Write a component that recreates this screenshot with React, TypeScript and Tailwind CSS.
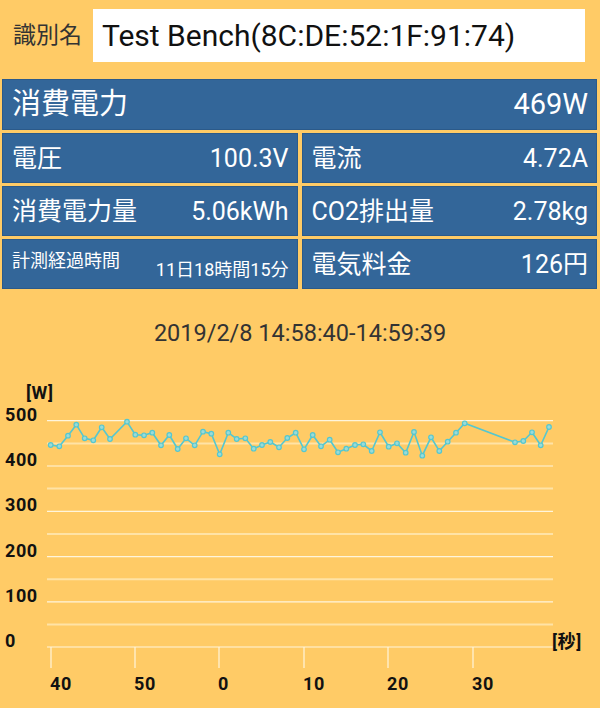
import React from "react";

const pts: [number, number][] = [
  [50.7, 445], [59.3, 446.3], [68, 435.7], [76.3, 424.7], [84.7, 438.3], [93.3, 440.3],
  [101.7, 427.3], [110, 439], [127, 421.7], [135.3, 434.7], [144, 435.3], [152.3, 432.7],
  [161, 445.3], [169.3, 435], [177.7, 449], [186, 438.3], [194.7, 445.3], [203, 431.7],
  [211.3, 433.7], [219.7, 454.3], [228.3, 432.7], [236.7, 439], [245.3, 438.3], [253.7, 448.7],
  [262, 445], [270.3, 442], [279, 447.3], [287.3, 438], [295.7, 432.7], [304, 449.3],
  [312.7, 435], [321, 446.3], [329.7, 439.7], [338, 452.3], [346.3, 448.7], [355, 445],
  [363.3, 444.3], [371.7, 451], [380, 432.3], [388.7, 446.7], [397, 443.3], [405.7, 452.7],
  [414, 432], [422.3, 455.7], [431, 437.3], [439.3, 451], [447.7, 441.7], [456, 432.7],
  [464.7, 423.3], [515, 442.3], [523.3, 441], [532, 432.3], [540.7, 445.3], [549, 427],
];

const majors = [
  { y: 420.7, l: "500" },
  { y: 466, l: "400" },
  { y: 511.3, l: "300" },
  { y: 556.6, l: "200" },
  { y: 601.8, l: "100" },
  { y: 647, l: "0" },
];
const minors = [443.4, 488.6, 533.9, 579.2, 624.4];
const ticks = [
  { x: 51, l: "40" },
  { x: 135, l: "50" },
  { x: 219, l: "0" },
  { x: 304, l: "10" },
  { x: 388, l: "20" },
  { x: 473, l: "30" },
];

function Cell({ label, value }: { label: string; value: string }) {
  return (
    <div className="h-[50px] bg-[#336699] border border-[#2b5a8a] flex items-center justify-between pl-[9px] pr-[8px] text-white text-[25px] leading-none">
      <span>{label}</span>
      <span>{value}</span>
    </div>
  );
}

export default function App() {
  const font = "font-['Roboto','Noto_Sans_CJK_JP',sans-serif]";
  return (
    <div className={`w-[600px] h-[708px] bg-[#ffcb66] overflow-hidden ${font}`}>
      <div className="flex items-center pt-[9px] pl-[13px]">
        <span className="text-[23px] text-[#333] w-[80px] leading-none">識別名</span>
        <div className="w-[492px] h-[53px] bg-white flex items-center pl-[9px] text-[30px] text-[#111] leading-none">
          Test Bench(8C:DE:52:1F:91:74)
        </div>
      </div>

      <div className="mt-[17px] pl-[2px] pr-[3px] flex flex-col gap-[3px]">
        <div className="h-[51px] bg-[#336699] border border-[#2b5a8a] flex items-center justify-between pl-[9px] pr-[8px] text-white text-[29px] leading-none">
          <span>消費電力</span>
          <span>469W</span>
        </div>
        <div className="grid grid-cols-2 gap-x-[4px] gap-y-[3px]">
          <Cell label="電圧" value="100.3V" />
          <Cell label="電流" value="4.72A" />
          <Cell label="消費電力量" value="5.06kWh" />
          <Cell label="CO2排出量" value="2.78kg" />
          <div className="h-[50px] bg-[#336699] border border-[#2b5a8a] flex justify-between pl-[9px] pr-[8px] text-white text-[18px] leading-[24px]">
            <span className="self-start pt-[9px]">計測経過時間</span>
            <span className="self-end pb-[6px]">11日18時間15分</span>
          </div>
          <Cell label="電気料金" value="126円" />
        </div>
      </div>

      <div className="h-[71px] pt-[19px] flex items-center justify-center text-[23.5px] text-[#333] leading-none">
        2019/2/8 14:58:40-14:59:39
      </div>

      <svg width="600" height="348" viewBox="0 360 600 348" className="block">
        {minors.map((y) => (
          <line key={y} x1={47} x2={553} y1={y} y2={y} stroke="#ffe3a6" strokeWidth={2} />
        ))}
        {majors.map((m) => (
          <line key={m.l} x1={47} x2={553} y1={m.y} y2={m.y} stroke="#fff5dc" strokeWidth={1.2} />
        ))}
        {ticks.map((t) => (
          <line key={t.l} x1={t.x} x2={t.x} y1={647} y2={668} stroke="#fff5dc" strokeWidth={1.2} />
        ))}
        <polyline
          points={pts.map((p) => p.join(",")).join(" ")}
          fill="none"
          stroke="#55c7cf"
          strokeWidth={1.6}
        />
        {pts.map((p, i) => (
          <circle key={i} cx={p[0]} cy={p[1]} r={2.3} fill="#9adbd8" stroke="#55c7cf" strokeWidth={1.2} />
        ))}
        <g fontFamily="Roboto, 'Noto Sans CJK JP', sans-serif" fontWeight="bold" fontSize="18" fill="#111" letterSpacing="0.6">
          <text x={26} y={399}>[W]</text>
          {majors.map((m) => (
            <text key={m.l} x={5} y={m.y}>{m.l}</text>
          ))}
          {ticks.map((t) => (
            <text key={t.l} x={t.x - 1} y={690}>{t.l}</text>
          ))}
          <text x={552} y={648}>[秒]</text>
        </g>
      </svg>
    </div>
  );
}
